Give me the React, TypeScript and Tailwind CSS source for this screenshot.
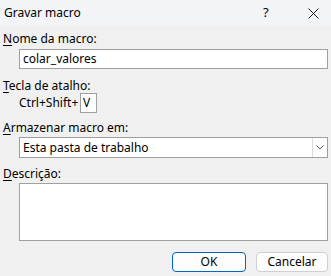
const font = { fontFamily: '"Segoe UI", "Noto Sans", "Open Sans", sans-serif' }

const Label = ({ k, rest, className }: { k: string; rest: string; className: string }) => (
  <div className={`h-[16px] pl-[3px] text-[12px] leading-[16px] text-black ${className}`}>
    <span className="underline underline-offset-[2px]">{k}</span>
    {rest}
  </div>
)

export default function App() {
  return (
    <div style={font} className="flex h-[276px] w-[331px] flex-col overflow-hidden bg-[#f0f0f0] text-black">
      {/* title bar */}
      <div className="flex h-[26px] items-center bg-[#f2f4f8] pl-[4px] text-[12px]">
        <span className="flex-1">Gravar macro</span>
        <span className="w-[10px] text-[13px]">?</span>
        <span className="ml-[34px] mr-[12px] flex w-[12px] items-center justify-center">
          <svg width="11" height="11" viewBox="0 0 11 11">
            <path d="M0.5 0.5 L10.5 10.5 M10.5 0.5 L0.5 10.5" stroke="#1a1a1a" strokeWidth="1" />
          </svg>
        </span>
      </div>

      <Label k="N" rest="ome da macro:" className="mt-[5px]" />
      <div className="ml-[19px] mr-[3px] mt-[2px] flex h-[20px] items-center border border-[#a0a0a0] bg-white pl-[3px] text-[12px]">
        colar_valores
      </div>

      <Label k="T" rest="ecla de atalho:" className="mt-[9px]" />
      <div className="ml-[19px] mt-[-1px] flex h-[20px] items-center text-[12px]">
        <span className="w-[61px]">Ctrl+Shift+</span>
        <div className="flex h-[20px] w-[17px] items-center border border-[#a0a0a0] bg-white pl-[2px]">V</div>
      </div>

      <Label k="A" rest="rmazenar macro em:" className="mt-[7px]" />
      <div className="ml-[19px] mr-[3px] mt-[1px] flex h-[21px] items-center border border-[#a0a0a0] bg-white text-[12px]">
        <span className="flex-1 pl-[3px]">Esta pasta de trabalho</span>
        <div className="flex h-full w-[15px] items-center justify-center border-l border-[#dcdcdc]">
          <svg width="8" height="5" viewBox="0 0 8 5">
            <path d="M0.5 0.5 L4 4 L7.5 0.5" fill="none" stroke="#555" strokeWidth="1" />
          </svg>
        </div>
      </div>

      <Label k="D" rest="escrição:" className="mt-[8px]" />
      <div className="ml-[19px] mr-[3px] mt-[1px] h-[58px] border border-[#a0a0a0] bg-white" />

      <div className="mr-[3px] mt-[11px] flex justify-end gap-[10px] text-[12px]">
        <button className="flex h-[20px] w-[74px] items-center justify-center rounded-[4px] border border-[#0067c0] bg-[#fdfdfd]">
          OK
        </button>
        <button className="flex h-[20px] w-[72px] items-center justify-center rounded-[4px] border border-[#d0d0d0] bg-[#fdfdfd]">
          Cancelar
        </button>
      </div>
    </div>
  )
}
